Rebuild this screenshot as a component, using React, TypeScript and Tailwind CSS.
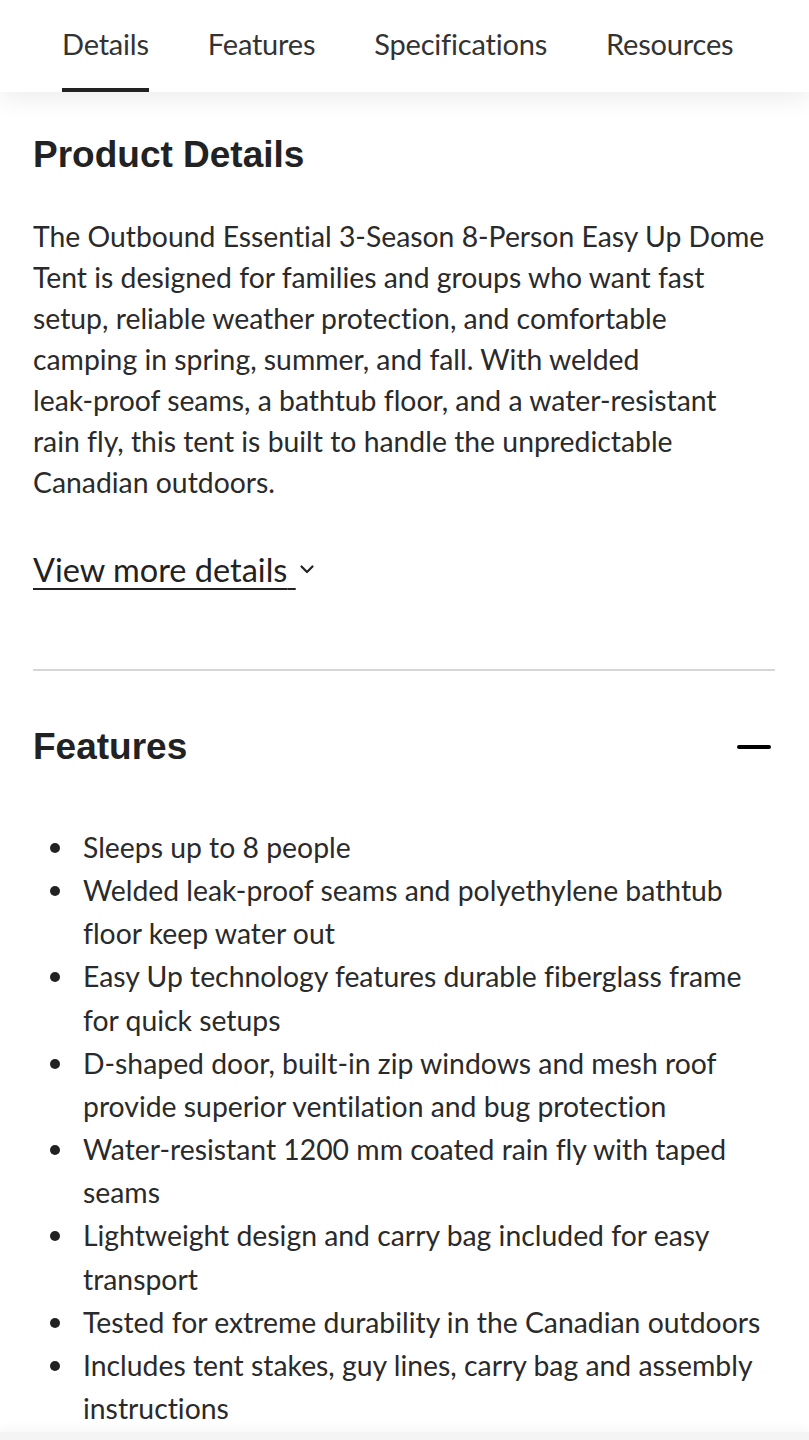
import React from "react";

const features = [
  "Sleeps up to 8 people",
  "Welded leak-proof seams and polyethylene bathtub floor keep water out",
  "Easy Up technology features durable fiberglass frame for quick setups",
  "D-shaped door, built-in zip windows and mesh roof provide superior ventilation and bug protection",
  "Water-resistant 1200 mm coated rain fly with taped seams",
  "Lightweight design and carry bag included for easy transport",
  "Tested for extreme durability in the Canadian outdoors",
  "Includes tent stakes, guy lines, carry bag and assembly instructions",
];

const paragraph =
  "The Outbound Essential 3-Season 8-Person Easy Up Dome Tent is designed for families and groups who want fast setup, reliable weather protection, and comfortable camping in spring, summer, and fall. With welded leak-\u2060proof seams, a bathtub floor, and a water-resistant rain fly, this tent is built to handle the unpredictable Canadian outdoors.";

export default function App() {
  return (
    <div className="w-[809px] h-[1440px] overflow-hidden bg-white text-[#222] font-['Lato','Noto_Sans',sans-serif] [font-variant-ligatures:no-common-ligatures] flex flex-col">
      <div className="h-[92px] shrink-0 bg-white flex items-stretch pl-[62px] gap-[59px] shadow-[0_6px_24px_rgba(0,0,0,0.08)] relative z-10">
        {["Details", "Features", "Specifications", "Resources"].map((t, i) => (
          <div key={t} className="flex flex-col justify-between">
            <div className="h-[88px] flex items-center text-[29px] text-[#333] tracking-[-0.2px]">{t}</div>
            <div className={i === 0 ? "h-[4px] bg-[#222]" : "h-[4px]"} />
          </div>
        ))}
      </div>
      <div className="flex-1 px-[33px] pt-[40px] flex flex-col min-h-0">
        <h2 className="font-['Liberation_Sans',Arial,sans-serif] font-bold text-[37px] leading-[46px] text-[#222]">
          Product Details
        </h2>
        <p className="mt-[38px] w-[734px] text-[28.35px] leading-[41px] text-[#2a2a2a]">{paragraph}</p>
        <div className="mt-[45px] flex items-center text-[32.5px] leading-[44px] text-[#222]">
          <span className="underline decoration-[2px] underline-offset-[6px]">View more details{"\u00a0"}</span>
          <svg width="16" height="16" viewBox="0 0 16 16" className="ml-[3px] mt-[-2px]">
            <path d="M2.5 5.5l5.5 5.5 5.5-5.5" fill="none" stroke="#222" strokeWidth="2.2" strokeLinecap="round" strokeLinejoin="round" />
          </svg>
        </div>
        <div className="mt-[77px] h-[2px] bg-[#d6d6d6] w-[742px]" />
        <div className="mt-[53px] flex items-center justify-between w-[742px]">
          <h2 className="font-['Liberation_Sans',Arial,sans-serif] font-bold text-[37px] leading-[46px] text-[#222]">
            Features
          </h2>
          <div className="w-[34px] h-[4px] rounded-full bg-black mr-[4px]" />
        </div>
        <ul className="mt-[56px] flex flex-col">
          {features.map((f) => (
            <li key={f} className="flex text-[28.35px] leading-[43.15px] text-[#2a2a2a]">
              <span className="w-[50px] shrink-0 flex justify-start pl-[17px] pt-[17px]">
                <span className="w-[10px] h-[10px] rounded-full bg-[#222]" />
              </span>
              <span className="w-[690px]">{f}</span>
            </li>
          ))}
        </ul>
      </div>
      <div className="h-[8px] shrink-0 bg-[#f4f4f4] shadow-[0_-4px_8px_rgba(0,0,0,0.04)]" />
    </div>
  );
}
